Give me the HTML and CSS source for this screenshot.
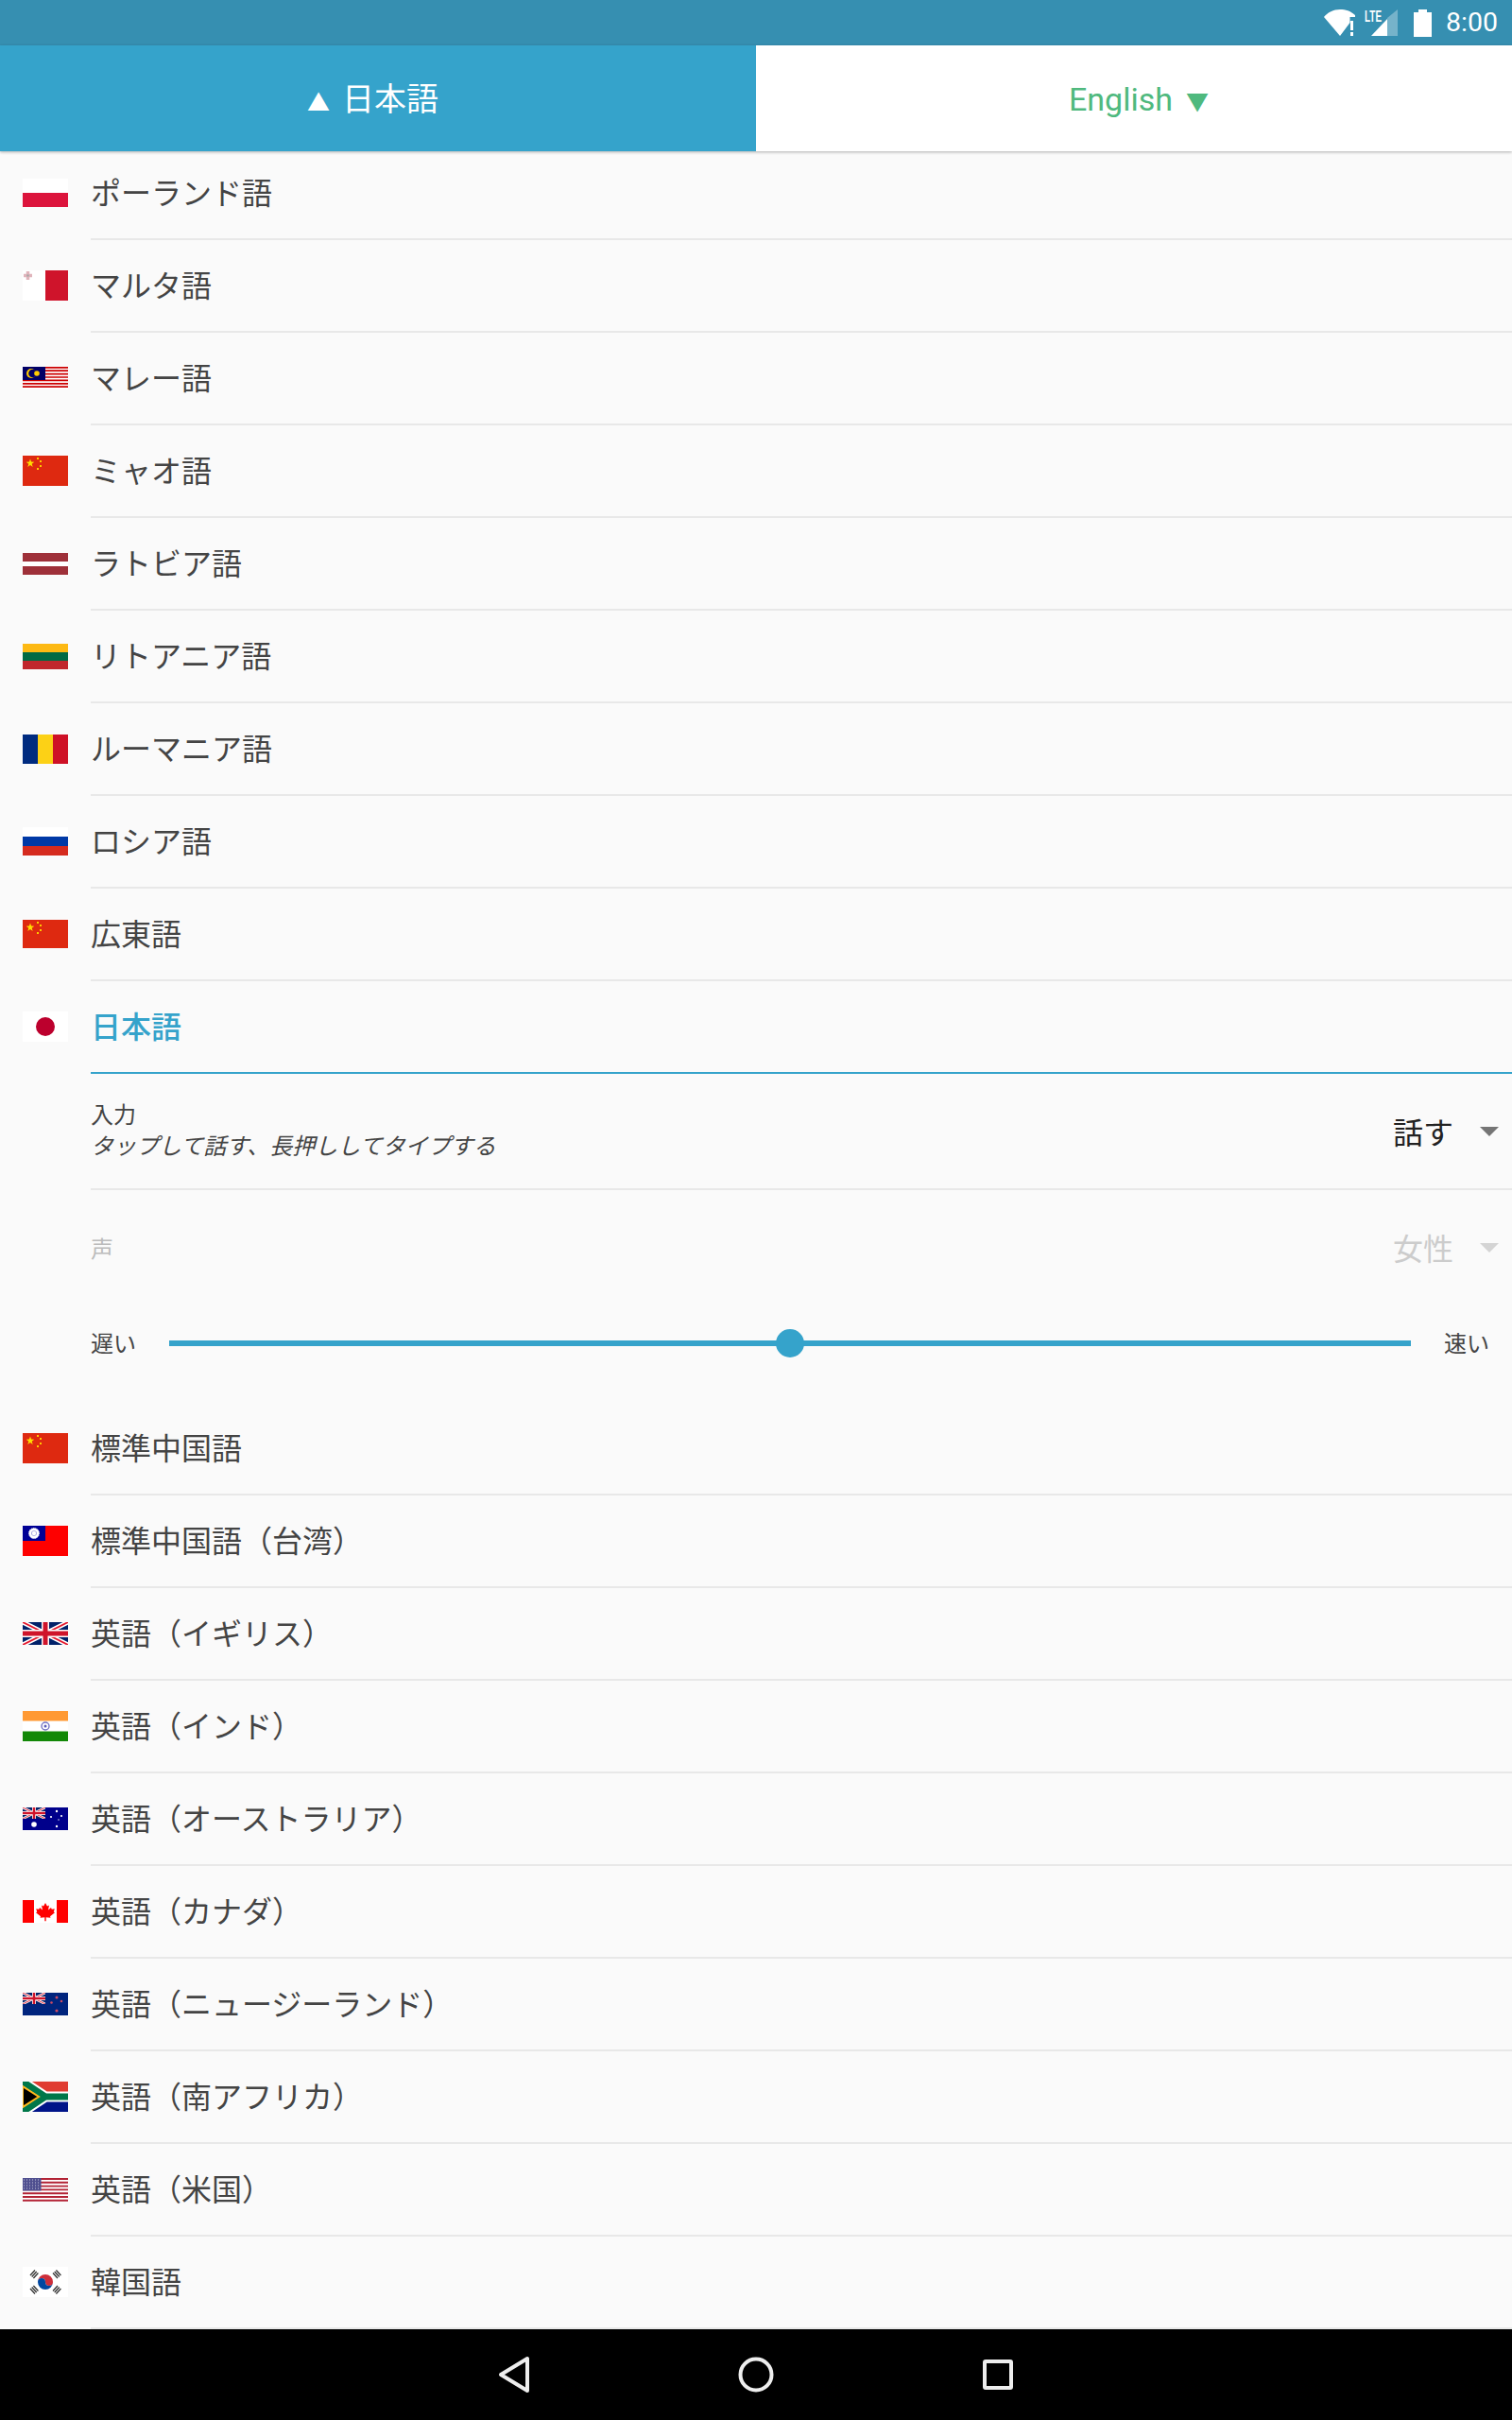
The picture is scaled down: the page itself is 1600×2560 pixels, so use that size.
FILE: index.html
```html
<!DOCTYPE html>
<html lang="ja">
<head>
<meta charset="utf-8">
<title>言語の選択</title>
<link rel="stylesheet" href="styles.css">
</head>
<body>
<svg class="defs" aria-hidden="true">
  <symbol id="uk" viewBox="0 0 48 24">
    <rect width="48" height="24" fill="#012169"/>
    <path d="M0 0L48 24M48 0L0 24" stroke="#fff" stroke-width="5"/>
    <path d="M0 0L48 24M48 0L0 24" stroke="#e4182c" stroke-width="1.8"/>
    <path d="M24 0V24M0 12H48" stroke="#fff" stroke-width="8"/>
    <path d="M24 0V24M0 12H48" stroke="#cf142b" stroke-width="5"/>
  </symbol>
  <symbol id="cn" viewBox="0 0 48 32">
    <rect width="48" height="32" fill="#de2910"/>
    <path d="M8 3.5l1.1 3.1 3.2.1-2.6 2 1 3.2L8 10.1l-2.7 1.8 1-3.2-2.6-2 3.2-.1z" fill="#ffde00"/>
    <g fill="#ffc800"><rect x="15" y="2" width="2" height="2"/><rect x="18" y="5" width="2" height="2"/><rect x="18" y="10" width="2" height="2"/><rect x="15" y="13" width="2" height="2"/></g>
  </symbol>
</svg>

<header class="status">
  <svg class="st-wifi" width="36" height="30" viewBox="0 0 36 30">
    <path d="M1 9C5 4 11 1 18 1c6 0 11 1.500 16 6v2h-5.500v6L18 29z" fill="#fff"/>
    <rect x="29" y="13" width="3" height="10" fill="#fff"/>
    <rect x="29" y="25" width="3" height="4" fill="#fff"/>
  </svg>
  <svg class="st-signal" width="36" height="30" viewBox="0 0 36 30">
    <path d="M35 1V29H24V10z" fill="#fff" opacity=".32"/>
    <path d="M24 11V29H7z" fill="#fff"/>
    <text class="st-lte" x="0" y="14" textLength="18" lengthAdjust="spacingAndGlyphs">LTE</text>
  </svg>
  <svg class="st-batt" width="19" height="30" viewBox="0 0 19 30">
    <path d="M0 4h5V1h9v3h5v26H0z" fill="#fff"/>
  </svg>
  <span class="st-time">8:00</span>
</header>

<nav class="tabs">
  <div class="tab tab-source"><span class="tri">▲</span><span>日本語</span></div>
  <div class="tab tab-target"><span>English</span><span class="tri">▼</span></div>
</nav>

<main class="list">
  <div class="row">
    <div class="flag-cell"><svg width="48" height="30" viewBox="0 0 48 30"><rect width="48" height="15" fill="#fff"/><rect y="15" width="48" height="15" fill="#dc143c"/></svg></div>
    <div class="row-label">ポーランド語</div>
  </div>
  <div class="row">
    <div class="flag-cell"><svg width="48" height="32" viewBox="0 0 48 32"><rect width="24" height="32" fill="#fff"/><rect x="24" width="24" height="32" fill="#cf142b"/><path d="M5.500 1v9M1 5.500h9" stroke="#e0b4bb" stroke-width="3.500"/><circle cx="5.500" cy="5.500" r="1.300" fill="#a8a8a8"/></svg></div>
    <div class="row-label">マルタ語</div>
  </div>
  <div class="row">
    <div class="flag-cell"><svg width="48" height="24" viewBox="0 0 48 24"><rect width="48" height="24" fill="#fff"/><path d="M0 .8H48M0 4.200H48M0 7.600H48M0 11H48M0 14.400H48M0 17.800H48M0 21.200H48" stroke="#cc0001" stroke-width="1.700"/><rect width="24" height="14" fill="#010066"/><circle cx="9" cy="7" r="5" fill="#ffcc00"/><circle cx="10.500" cy="7" r="4.300" fill="#010066"/><circle cx="15" cy="7" r="2.800" fill="#ffcc00"/></svg></div>
    <div class="row-label">マレー語</div>
  </div>
  <div class="row">
    <div class="flag-cell"><svg width="48" height="32"><use href="#cn"/></svg></div>
    <div class="row-label">ミャオ語</div>
  </div>
  <div class="row">
    <div class="flag-cell"><svg width="48" height="23" viewBox="0 0 48 23"><rect width="48" height="23" fill="#9e3039"/><rect y="9" width="48" height="5" fill="#fff"/></svg></div>
    <div class="row-label">ラトビア語</div>
  </div>
  <div class="row">
    <div class="flag-cell"><svg width="48" height="27" viewBox="0 0 48 27"><rect width="48" height="9" fill="#fdb913"/><rect y="9" width="48" height="9" fill="#006a44"/><rect y="18" width="48" height="9" fill="#c1272d"/></svg></div>
    <div class="row-label">リトアニア語</div>
  </div>
  <div class="row">
    <div class="flag-cell"><svg width="48" height="31" viewBox="0 0 48 31"><rect width="16" height="31" fill="#002b7f"/><rect x="16" width="16" height="31" fill="#fcd116"/><rect x="32" width="16" height="31" fill="#ce1126"/></svg></div>
    <div class="row-label">ルーマニア語</div>
  </div>
  <div class="row">
    <div class="flag-cell"><svg width="48" height="30" viewBox="0 0 48 30"><rect width="48" height="10" fill="#fff"/><rect y="10" width="48" height="10" fill="#0039a6"/><rect y="20" width="48" height="10" fill="#d52b1e"/></svg></div>
    <div class="row-label">ロシア語</div>
  </div>
  <div class="row">
    <div class="flag-cell"><svg width="48" height="30" viewBox="0 0 48 30"><use href="#cn" width="48" height="32"/></svg></div>
    <div class="row-label">広東語</div>
  </div>
  <div class="row row-active">
    <div class="flag-cell"><svg width="48" height="32" viewBox="0 0 48 32"><rect width="48" height="32" fill="#fff"/><circle cx="24" cy="16" r="10" fill="#bc002d"/></svg></div>
    <div class="row-label">日本語</div>
  </div>

  <section class="panel">
    <div class="opt opt-input">
      <div class="opt-text">
        <div>入力</div>
        <div class="opt-hint">タップして話す、長押ししてタイプする</div>
      </div>
      <div class="drop"><span>話す</span><i class="caret"></i></div>
    </div>
    <div class="opt opt-voice">
      <div class="opt-text">声</div>
      <div class="drop"><span>女性</span><i class="caret"></i></div>
    </div>
    <div class="speed">
      <span>遅い</span>
      <div class="track"><i class="thumb"></i></div>
      <span>速い</span>
    </div>
  </section>

  <div class="row">
    <div class="flag-cell"><svg width="48" height="32"><use href="#cn"/></svg></div>
    <div class="row-label">標準中国語</div>
  </div>
  <div class="row">
    <div class="flag-cell"><svg width="48" height="32" viewBox="0 0 48 32"><rect width="48" height="32" fill="#fe0000"/><rect width="24" height="16" fill="#000095"/><circle cx="12" cy="8" r="5.500" fill="#fff" stroke="#fff" stroke-width="1" stroke-dasharray="1 1"/><circle cx="12" cy="8" r="2.800" fill="#8d8dd6"/><circle cx="12" cy="8" r="2.200" fill="#fff"/></svg></div>
    <div class="row-label">標準中国語（台湾）</div>
  </div>
  <div class="row">
    <div class="flag-cell"><svg width="48" height="24"><use href="#uk" width="48" height="24"/></svg></div>
    <div class="row-label">英語（イギリス）</div>
  </div>
  <div class="row">
    <div class="flag-cell"><svg width="48" height="32" viewBox="0 0 48 32"><rect width="48" height="32" fill="#fff"/><rect width="48" height="10.500" fill="#ff9933"/><rect y="21.500" width="48" height="10.500" fill="#128807"/><circle cx="24" cy="16" r="4" fill="none" stroke="#7474c4" stroke-width="1.400"/><circle cx="24" cy="16" r="1.500" fill="#5a5ab8"/></svg></div>
    <div class="row-label">英語（インド）</div>
  </div>
  <div class="row">
    <div class="flag-cell"><svg width="48" height="24" viewBox="0 0 48 24"><rect width="48" height="24" fill="#00008b"/><use href="#uk" width="24" height="12"/><circle cx="12" cy="18" r="2.800" fill="#fff"/><g fill="#fff"><circle cx="36" cy="4" r="1.200"/><circle cx="30" cy="10" r="1.100"/><circle cx="41" cy="9" r="1.100"/><circle cx="38" cy="13" r=".7"/><circle cx="36" cy="20" r="1.200"/></g></svg></div>
    <div class="row-label">英語（オーストラリア）</div>
  </div>
  <div class="row">
    <div class="flag-cell"><svg width="48" height="24" viewBox="0 0 48 24"><rect width="48" height="24" fill="#fff"/><rect width="12" height="24" fill="#f00"/><rect x="36" width="12" height="24" fill="#f00"/><path d="M24 3l2 3.500 2-1-1 5 3-2.500.8 1.700 3-.5-1 3.300 1.200.7-5 4 .5 1.600-4.800-.6v4h-1.400v-4l-4.800.6.500-1.600-5-4 1.200-.7-1-3.300 3 .5.8-1.700 3 2.500-1-5 2 1z" fill="#f00"/></svg></div>
    <div class="row-label">英語（カナダ）</div>
  </div>
  <div class="row">
    <div class="flag-cell"><svg width="48" height="24" viewBox="0 0 48 24"><rect width="48" height="24" fill="#00247d"/><use href="#uk" width="24" height="12"/><g fill="#cc4a63"><circle cx="36" cy="5" r="1.500"/><circle cx="30.500" cy="10.500" r="1.300"/><circle cx="41" cy="9" r="1.300"/><circle cx="36" cy="19" r="1.600"/></g></svg></div>
    <div class="row-label">英語（ニュージーランド）</div>
  </div>
  <div class="row">
    <div class="flag-cell"><svg width="48" height="32" viewBox="0 0 48 32"><rect width="48" height="16" fill="#e03c31"/><rect y="16" width="48" height="16" fill="#001489"/><path d="M0 0L24 16L0 32M24 16H48" fill="none" stroke="#fff" stroke-width="11"/><path d="M0 0L24 16L0 32M24 16H48" fill="none" stroke="#007749" stroke-width="7"/><path d="M0 5L17 16L0 27z" fill="#000" stroke="#ffb81c" stroke-width="2"/></svg></div>
    <div class="row-label">英語（南アフリカ）</div>
  </div>
  <div class="row">
    <div class="flag-cell"><svg width="48" height="25" viewBox="0 0 48 25"><rect width="48" height="25" fill="#fff"/><path d="M0 1H48M0 4.800H48M0 8.600H48M0 12.400H48M0 16.200H48M0 20H48M0 23.800H48" stroke="#b22234" stroke-width="1.900"/><rect width="19.500" height="13.500" fill="#4f4f8f"/><path d="M1 2H19M1 5H19M1 8H19M1 11H19" stroke="#c8c8dc" stroke-width="1" stroke-dasharray="1 2"/></svg></div>
    <div class="row-label">英語（米国）</div>
  </div>
  <div class="row">
    <div class="flag-cell"><svg width="48" height="32" viewBox="0 0 48 32"><rect width="48" height="32" fill="#fff"/><path d="M16 16a8 8 0 0 1 16 0a4 4 0 0 1-8 0a4 4 0 0 0-8 0z" fill="#cd2e3a"/><path d="M16 16a4 4 0 0 1 8 0a4 4 0 0 0 8 0a8 8 0 0 1-16 0z" fill="#0047a0"/><g stroke="#333" stroke-width="1.300"><path d="M8 9l5-5.500M9.700 10.500l5-5.500M11.400 12l5-5.500"/><path d="M32 6.500l5 5.500M33.700 5l5 5.500M35.400 3.500l5 5.500"/><path d="M8 23l5 5.500M9.700 21.500l5 5.500M11.400 20l5 5.500"/><path d="M32 25.500l5-5.500M33.700 27l5-5.500M35.400 28.500l5-5.500"/></g></svg></div>
    <div class="row-label">韓国語</div>
  </div>
</main>

<footer class="navbar">
  <svg width="34" height="40" viewBox="0 0 34 40"><path d="M31 3V37L3 20z" fill="none" stroke="#eee" stroke-width="4" stroke-linejoin="round"/></svg>
  <svg width="38" height="38" viewBox="0 0 38 38"><circle cx="19" cy="19" r="16.500" fill="none" stroke="#eee" stroke-width="4"/></svg>
  <svg width="34" height="34" viewBox="0 0 34 34"><rect x="3" y="3" width="28" height="28" rx="1" fill="none" stroke="#eee" stroke-width="4"/></svg>
</footer>
</body>
</html>
```

FILE: styles.css
```css
* { box-sizing: border-box; }
html, body { margin: 0; padding: 0; }
body {
  width: 1600px;
  height: 2560px;
  overflow: hidden;
  background: #fafafa;
  color: #444;
  font-family: Roboto, "Noto Sans CJK JP", sans-serif;
  display: flex;
  flex-direction: column;
}
.defs { width: 0; height: 0; display: block; }

.status {
  height: 48px;
  flex: none;
  background: #368fb1;
  display: flex;
  align-items: center;
  justify-content: flex-end;
  padding-right: 15px;
}
.st-wifi { margin-right: 8px; }
.st-signal { margin-right: 16px; }
.st-batt { margin-right: 15px; }
.st-lte { font: 700 17px "Liberation Sans", sans-serif; fill: #fff; }
.st-time { color: #fff; font: 400 28.5px/48px Roboto, sans-serif; }

.tabs {
  height: 112px;
  flex: none;
  display: flex;
  background: #fff;
  position: relative;
  z-index: 2;
  box-shadow: 0 1px 3px rgba(0,0,0,.3);
}
.tab {
  flex: 0 0 50%;
  display: flex;
  align-items: baseline;
  justify-content: center;
  gap: 14px;
  padding-top: 3px;
  font-size: 34px;
  line-height: 109px;
}
.tri { font-size: 24px; }
.tab-source { background: #35a3cb; color: #fff; padding-right: 11px; gap: 13px; }
.tab-target { color: #4fb97e; padding-left: 10px; }

.list { margin-top: -4px; flex: none; }

.row { display: flex; height: 98px; }
.flag-cell {
  width: 96px;
  height: 96px;
  flex: none;
  padding-left: 24px;
  display: flex;
  align-items: center;
}
.flag-cell svg { display: block; }
.row-label {
  flex: 1;
  border-bottom: 2px solid #e8e8e8;
  font-size: 32px;
  line-height: 96px;
  padding-top: 1px;
}
.row-active .row-label {
  color: #35a3cb;
  font-weight: 500;
  border-bottom-color: #35a3cb;
}

.panel { margin-left: 96px; font-size: 24px; }
.opt {
  display: flex;
  align-items: center;
  justify-content: space-between;
  padding-right: 14px;
}
.opt-input { height: 123px; border-bottom: 2px solid #e8e8e8; }
.opt-voice { height: 122px; color: #bbb; }
.opt-text { line-height: 33px; }
.opt-voice .opt-text { padding-top: 4px; }
.opt-hint { font-style: italic; }
.drop { display: flex; align-items: center; gap: 28px; font-size: 32px; line-height: 40px; color: #222; }
.drop span { padding-top: 4px; }
.opt-voice .drop { color: #ccc; }
.caret {
  display: block;
  width: 0;
  height: 0;
  border-left: 10px solid transparent;
  border-right: 10px solid transparent;
  border-top: 10px solid #757575;
}
.opt-voice .caret { border-top-color: #d4d4d4; }

.speed {
  height: 103px;
  padding: 0 24px 23px 0;
  display: flex;
  align-items: center;
  gap: 35px;
  line-height: 40px;
}
.speed span { padding-top: 1px; }
.track {
  flex: 1;
  height: 6px;
  background: #35a3cb;
  position: relative;
}
.thumb {
  position: absolute;
  left: 50%;
  top: 50%;
  width: 30px;
  height: 30px;
  margin: -15px 0 0 -15px;
  border-radius: 50%;
  background: #35a3cb;
}

.navbar {
  flex: none;
  height: 96px;
  background: #000;
  display: grid;
  grid-template-columns: 1fr 38px 1fr;
  column-gap: 220px;
  align-items: center;
  justify-items: center;
  padding: 0 529px 0 527px;
}
```
